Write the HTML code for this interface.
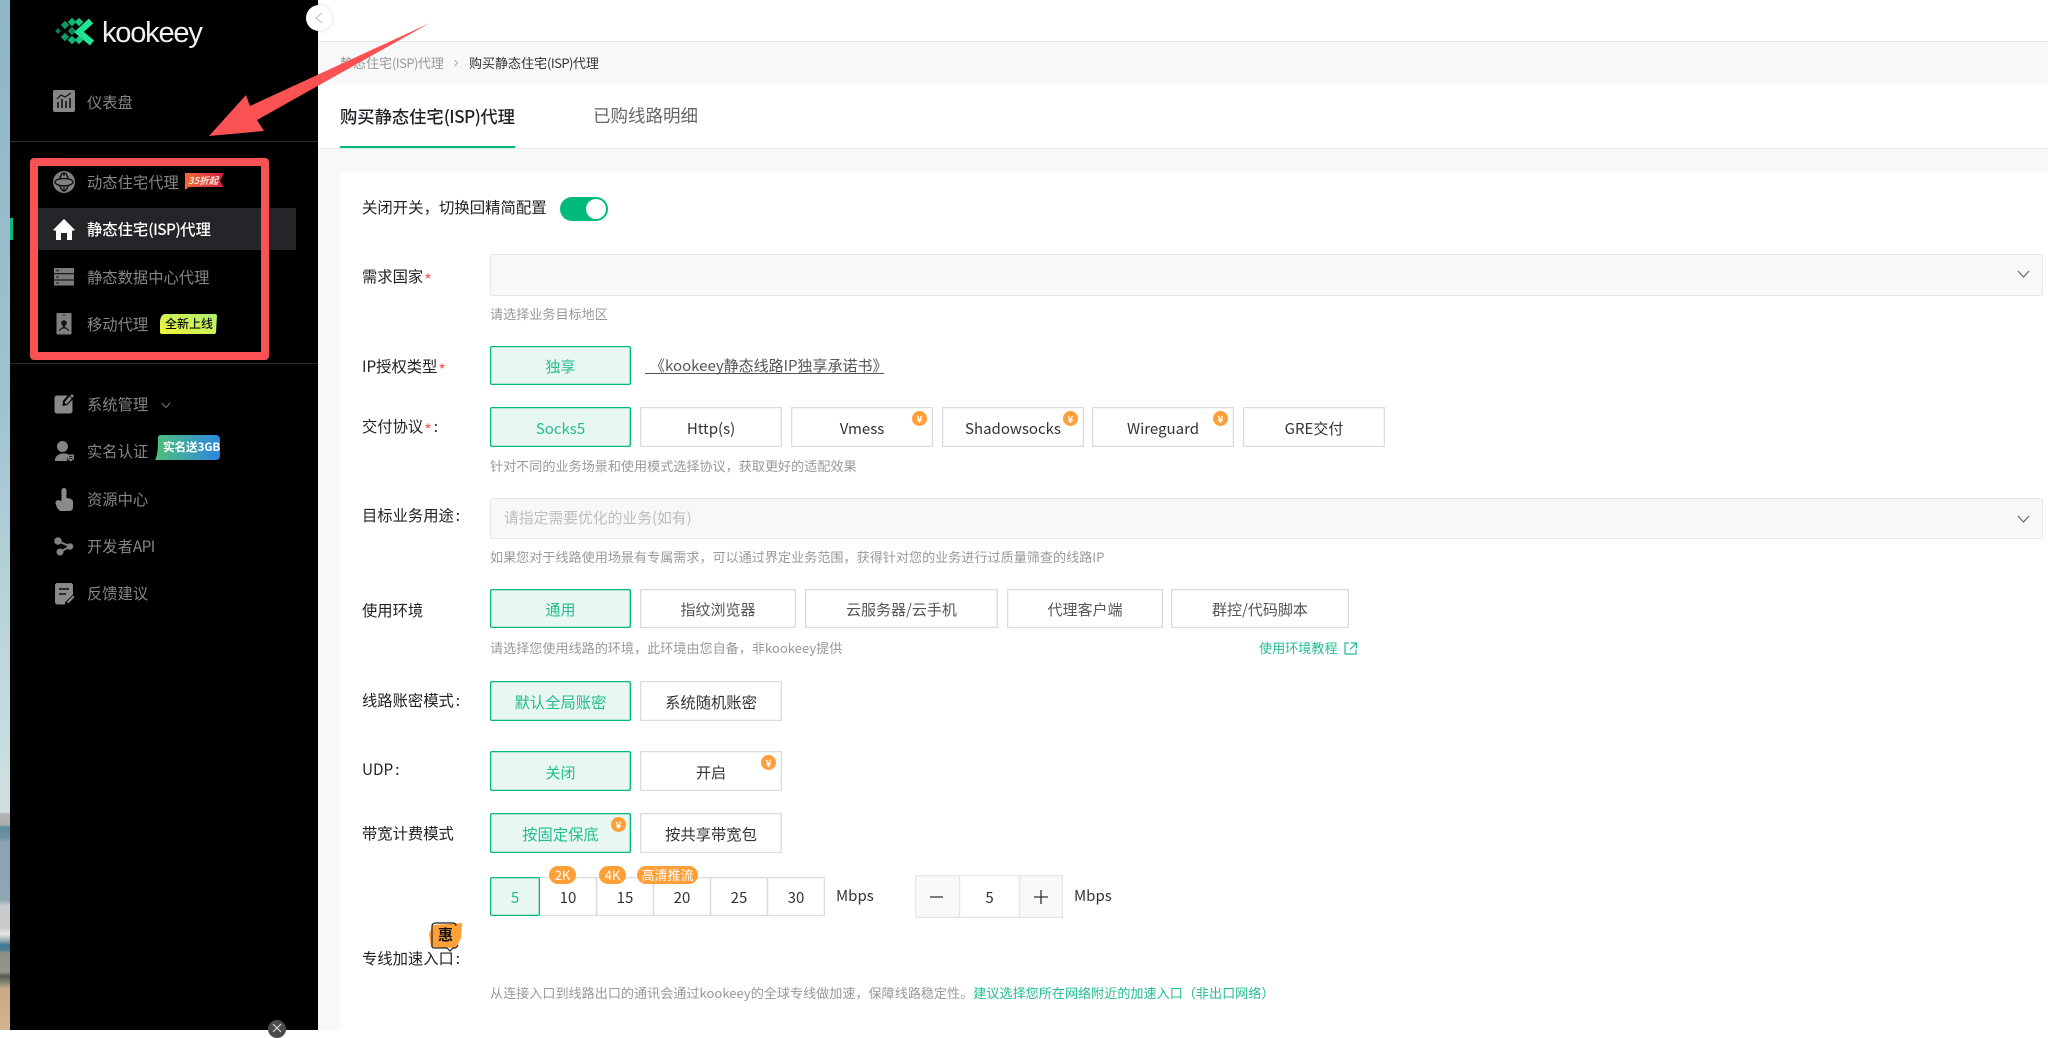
<!DOCTYPE html>
<html lang="zh-CN">
<head>
<meta charset="utf-8">
<title>kookeey</title>
<style>
html,body{margin:0;padding:0;background:#fff}
body{width:2048px;height:1030px;position:relative;overflow:hidden;font-family:"Noto Sans CJK SC","Liberation Sans",sans-serif;font-size:15.3px;color:#222}
.a{position:absolute;white-space:nowrap}
.t{position:absolute;white-space:nowrap;line-height:20px;height:20px}
.m{color:#858585}
.h{color:#999;font-size:13.1px}
.b{position:absolute;box-sizing:border-box;display:flex;align-items:center;justify-content:center;white-space:nowrap;box-shadow:inset 0 0 0 1.3px #dcdcdc;background:#fff;color:#333;font-size:15px;padding-top:2px}
.s{box-shadow:inset 0 0 0 1.3px #00ba7c;background:#e8f7f2;color:#22bd8c;border-radius:2px}
.y{position:absolute;width:15px;height:15px;border-radius:50%;background:#ff9f38;color:#fff;font-size:10px;line-height:15px;text-align:center;font-weight:700}
.o{position:absolute;height:18px;border-radius:9px;background:#ff9f38;color:#fff;font-size:13px;line-height:18px;text-align:center}
.sel{position:absolute;box-sizing:border-box;left:490px;width:1553px;height:42px;background:#f7f8fa;border:1px solid #e4e7eb;border-radius:2px}
.r{color:#f55;position:relative;top:4px;font-size:16px;margin-left:1px}
.c{margin-left:2px}
.n{letter-spacing:-.55px}
svg{position:absolute;overflow:visible}
</style>
</head>
<body>
<!-- left wallpaper strip -->
<div class="a" style="left:0;top:0;width:10px;height:1030px;background:linear-gradient(180deg,#8db6c6 0,#9fc2cf 400px,#bcd6dc 640px,#d0e0e2 812px,#b3b7b6 814px,#a8adad 825px,#5f8b9a 827px,#6d93a2 838px,#8ea4b2 842px,#8fa5b3 900px,#c9cdd0 906px,#c8cacc 928px,#e8e8e6 934px,#8fa3ab 941px,#3f7a93 945px,#4f7e91 950px,#8d9088 953px,#94958a 972px,#55584f 976px,#80806f 982px,#c9a983 988px,#d1b491 1030px)"></div>
<!-- sidebar -->
<div class="a" style="left:10px;top:0;width:308px;height:1030px;background:#000"></div>
<!-- main backgrounds -->
<div class="a" style="left:318px;top:41px;width:1730px;height:1px;background:#e6e6e6"></div>
<div class="a" style="left:318px;top:42px;width:1730px;height:41px;background:#f7f8fa"></div>
<div class="a" style="left:318px;top:148px;width:1730px;height:1px;background:#e4e7eb"></div>
<div class="a" style="left:318px;top:149px;width:1730px;height:22px;background:#f7f8fa"></div>
<div class="a" style="left:318px;top:171px;width:22px;height:859px;background:#f7f8fa"></div>

<!-- logo -->
<svg style="left:0;top:0" width="320" height="60" viewBox="0 0 320 60">
<g fill="#0f9a63"><rect x="-3" y="-3" width="6" height="6" transform="translate(58 31) rotate(45) scale(.7)" fill="#0a7a50"/><rect x="-3" y="-3" width="6" height="6" transform="translate(65 25) rotate(45)"/><rect x="-3" y="-3" width="6" height="6" transform="translate(65 37) rotate(45)"/><rect x="-3" y="-3" width="6" height="6" transform="translate(72 22) rotate(45)" fill="#13b576"/><rect x="-3" y="-3" width="6" height="6" transform="translate(72 31) rotate(45)" fill="#0c8658"/><rect x="-3" y="-3" width="6" height="6" transform="translate(72 40) rotate(45)" fill="#13b576"/><rect x="-3" y="-3" width="6" height="6" transform="translate(79 22) rotate(45)" fill="#17c884"/><rect x="-3" y="-3" width="6" height="6" transform="translate(79 40) rotate(45)" fill="#17c884"/></g>
<path d="M91 21L79 32L92 43" fill="none" stroke="#21e594" stroke-width="6.5" stroke-linejoin="miter"/>
</svg>
<div class="a" style="left:102px;top:12px;font-size:29px;line-height:42px;color:#f2f2f2;letter-spacing:-1.2px;font-family:'Liberation Sans',sans-serif">kookeey</div>

<!-- collapse -->
<div class="a" style="left:306px;top:5px;width:26px;height:26px;border-radius:50%;background:#fff;box-shadow:0 0 4px rgba(0,0,0,.15)"></div>
<svg style="left:0;top:0" width="340" height="40"><path d="M322 13L316 18L322 23" fill="none" stroke="#bbb" stroke-width="1"/></svg>

<!-- menu -->
<div class="a" style="left:10px;top:141px;width:308px;height:1px;background:#2a2a2a"></div>
<div class="a" style="left:10px;top:363px;width:308px;height:1px;background:#2a2a2a"></div>
<div class="a" style="left:38px;top:208px;width:258px;height:42px;background:#242529"></div>
<div class="a" style="left:10px;top:218px;width:3px;height:22px;background:#00ba7c"></div>

<div class="t m" style="left:87px;top:92px">仪表盘</div>
<div class="t m" style="left:87px;top:172px">动态住宅代理</div>
<div class="t" style="left:87px;top:219px;color:#fff;font-weight:500">静态住宅<span class="n">(ISP)</span>代理</div>
<div class="t m" style="left:87px;top:267px">静态数据中心代理</div>
<div class="t m" style="left:87px;top:314px">移动代理</div>
<div class="t m" style="left:87px;top:394px">系统管理</div>
<div class="t m" style="left:87px;top:441px">实名认证</div>
<div class="t m" style="left:87px;top:489px">资源中心</div>
<div class="t m" style="left:87px;top:536px">开发者<span class="n">API</span></div>
<div class="t m" style="left:87px;top:583px">反馈建议</div>

<!-- menu icons -->
<svg style="left:0;top:0" width="320" height="620" viewBox="0 0 320 620">
<!-- dashboard -->
<rect x="53" y="90" width="22" height="22" rx="2" fill="#868686"/>
<path d="M58 108v-6M62 108v-9M66 108v-7M70 108v-10" stroke="#111" stroke-width="1.6"/>
<path d="M57 99L61 95L65 97L71 93" fill="none" stroke="#111" stroke-width="1.2"/>
<!-- dynamic -->
<circle cx="64" cy="182" r="11" fill="#808080"/>
<ellipse cx="64" cy="182" rx="4.500" ry="9" fill="none" stroke="#111" stroke-width="1.400"/>
<path d="M55 182c0-2 4-3.500 9-3.500s9 1.500 9 3.500s-4 4-9 4s-9-2-9-4z" fill="#808080" stroke="#111" stroke-width="1.400"/>
<path d="M64 173v3M64 187v4" stroke="#111" stroke-width="1.400"/>
<!-- home -->
<path d="M64 219L53 230L56 231V240H61V233H67V240H72V231L75 230Z" fill="#fff"/>
<!-- server -->
<path d="M54 268h20v5.200h-20zM54 274.300h20v5.200h-20zM54 280.500h20v5h-20z" fill="#7c7c7c"/>
<path d="M56.500 270.500h2M56.500 277h2M56.500 283h2" stroke="#111" stroke-width="1.500"/>
<!-- mobile -->
<rect x="56.500" y="313" width="15" height="21.500" rx="1" fill="#808080"/>
<circle cx="64" cy="323" r="2.800" fill="#111"/>
<path d="M64 324.500l2 3h-4z" fill="#111"/>
<path d="M59 331c1.500-2.500 3-3 5-3s3.500.5 5 3" fill="none" stroke="#111" stroke-width="1"/>
<path d="M62.500 315h3" stroke="#111" stroke-width=".8"/>
<!-- system -->
<path d="M57 395.500h10.500l-4.500 5.500l-.5 5l5-1l5-5.500v11.500a2.500 2.500 0 0 1-2.500 2.500H57a2.500 2.500 0 0 1-2.500-2.500V398a2.500 2.500 0 0 1 2.500-2.500z" fill="#8a8a8a"/>
<path d="M65.500 403.500l5-6" stroke="#8a8a8a" stroke-width="3"/>
<circle cx="72" cy="396" r="1.500" fill="#8a8a8a"/>
<!-- person -->
<circle cx="62.500" cy="446.500" r="5.500" fill="#858585"/>
<path d="M55 461c-.5-3.500 2-6 6-7.500h5c1.500.5 2.500 1.200 3 2c-2 1-2.500 3.500-1.500 5.500z" fill="#858585"/>
<path d="M67.500 454.500h6.500v4.500l-3.200 2.500l-3.300-2.500z" fill="#858585"/>
<path d="M69 456.500h3.500M69 458.500h3.500" stroke="#000" stroke-width=".8"/>
<!-- hand -->
<path d="M64 488c1.500 0 2.500 1 2.500 2.500V498c3 .3 6.500 1.200 6.500 4v5.500c0 2-1.500 3.500-3.500 3.500h-7.500c-2.500 0-3.500-1-5-3.500l-1.500-4c-.5-1.500 1-3 2.500-3.500l3.500 1V490.500c0-1.500 1-2.500 2.500-2.500z" fill="#8a8a8a"/>
<!-- api -->
<path d="M58 541L70 546.500L60 552" stroke="#828282" stroke-width="2" fill="none"/>
<circle cx="58" cy="541" r="3.800" fill="#828282"/><circle cx="70" cy="546.500" r="3.200" fill="#828282"/><circle cx="60" cy="552" r="3.500" fill="#828282"/>
<!-- feedback -->
<path d="M57.500 583h13a2.500 2.500 0 0 1 2.500 2.500v9l-8 8v2H57.500a2.500 2.500 0 0 1-2.500-2.500V585.500a2.500 2.500 0 0 1 2.500-2.500z" fill="#8a8a8a"/>
<path d="M59 589h10M59 594h7" stroke="#111" stroke-width="1.500"/>
<path d="M67 602l6-6.500l1.500 1.500l-6 6.500z" fill="#8a8a8a"/>
<!-- caret -->
<path d="M161.500 403L166 407.500L170 403" fill="none" stroke="#777" stroke-width="1"/>
</svg>

<!-- sidebar tags -->
<svg style="left:0;top:0" width="320" height="470" viewBox="0 0 320 470">
<defs>
<linearGradient id="g1" x1="0" x2="1"><stop offset="0" stop-color="#f06a3c"/><stop offset="1" stop-color="#d4203f"/></linearGradient>
<linearGradient id="g2" x1="0" x2="1" y1="1" y2="0"><stop offset="0" stop-color="#f1f537"/><stop offset="1" stop-color="#aef070"/></linearGradient>
<linearGradient id="g3" x1="0" x2="1"><stop offset="0" stop-color="#4fc07a"/><stop offset="1" stop-color="#2c86e0"/></linearGradient>
</defs>
<path d="M185 173H224L220 181L224 187H189L185 190Z" fill="url(#g1)"/>
<path d="M165 314H215a2 2 0 0 1 2 2L216 332a2 2 0 0 1-2 2H162a2 2 0 0 1-2-2V322C160 318 162 314 165 314Z" fill="url(#g2)"/>
<path d="M161 435H216a4 4 0 0 1 4 4V456a4 4 0 0 1-4 4H155C157 457 158 450 158 438C158 436 159 435 161 435Z" fill="url(#g3)"/>
</svg>
<div class="a" style="left:188px;top:172px;font-size:9.500px;line-height:17px;color:#ffe9d6;font-style:italic;font-weight:700">35折起</div>
<div class="a" style="left:165px;top:314px;font-size:12px;line-height:20px;color:#111;font-weight:500">全新上线</div>
<div class="a" style="left:163px;top:437px;font-size:11.600px;line-height:21px;color:#fff;font-weight:700;letter-spacing:-.1px">实名送3GB</div>

<!-- close -->
<div class="a" style="left:268px;top:1020px;width:18px;height:18px;border-radius:50%;background:#4a4a4a"></div>
<svg style="left:0;top:0" width="300" height="1030"><path d="M273 1024L281 1032M281 1024L273 1032" stroke="#ddd" stroke-width="1.200"/></svg>

<!-- breadcrumb -->
<div class="t" style="left:340px;top:53px;font-size:13px;color:#999">静态住宅<span class="n">(ISP)</span>代理</div>
<svg style="left:0;top:0" width="470" height="80"><path d="M454.500 60L457.500 63L454.500 66" fill="none" stroke="#aaa" stroke-width="1"/></svg>
<div class="t" style="left:469px;top:53px;font-size:13px;color:#333">购买静态住宅<span class="n">(ISP)</span>代理</div>

<!-- tabs -->
<div class="t" style="left:340px;top:106px;font-size:17.300px;color:#1f2328;font-weight:500">购买静态住宅<span class="n">(ISP)</span>代理</div>
<div class="t" style="left:593px;top:106px;font-size:17.500px;color:#666">已购线路明细</div>
<div class="a" style="left:340px;top:146px;width:175px;height:2px;background:#00ba7c"></div>

<!-- row: toggle -->
<div class="t" style="left:362px;top:197px;font-size:15.400px">关闭开关，切换回精简配置</div>
<div class="a" style="left:560px;top:197px;width:48px;height:24px;border-radius:12px;background:#00ba7c"></div>
<div class="a" style="left:586px;top:199px;width:20px;height:20px;border-radius:50%;background:#fff"></div>

<!-- country -->
<div class="t" style="left:362px;top:265px">需求国家<span class="r">*</span></div>
<div class="sel" style="top:254px"></div>
<div class="t h" style="left:490px;top:304px">请选择业务目标地区</div>

<!-- ip type -->
<div class="t" style="left:362px;top:355px">IP授权类型<span class="r">*</span></div>
<div class="b s" style="left:490px;top:346px;width:141px;height:39px">独享</div>
<div class="t" style="left:650px;top:356px;font-size:15px;color:#555">《kookeey静态线路IP独享承诺书》</div>
<div class="a" style="left:645px;top:373px;width:239px;height:1px;background:#555"></div>

<!-- protocol -->
<div class="t" style="left:362px;top:415px">交付协议<span class="r">*</span><span class="c">:</span></div>
<div class="b s" style="left:490px;top:407px;width:141px;height:40px">Socks5</div>
<div class="b" style="left:640px;top:407px;width:142px;height:40px">Http(s)</div>
<div class="b" style="left:791px;top:407px;width:142px;height:40px">Vmess</div>
<div class="b" style="left:942px;top:407px;width:142px;height:40px">Shadowsocks</div>
<div class="b" style="left:1092px;top:407px;width:142px;height:40px">Wireguard</div>
<div class="b" style="left:1243px;top:407px;width:142px;height:40px">GRE交付</div>
<div class="y" style="left:912px;top:411px">¥</div>
<div class="y" style="left:1063px;top:411px">¥</div>
<div class="y" style="left:1213px;top:411px">¥</div>
<div class="t h" style="left:490px;top:456px">针对不同的业务场景和使用模式选择协议，获取更好的适配效果</div>

<!-- target -->
<div class="t" style="left:362px;top:505px">目标业务用途<span class="c">:</span></div>
<div class="sel" style="top:498px;height:41px"></div>
<svg style="left:0;top:0" width="2048" height="560"><path d="M2018 271L2023.500 277L2029 271M2018 516L2023.500 522L2029 516" fill="none" stroke="#666" stroke-width="1.200"/></svg>
<div class="t" style="left:504px;top:508px;font-size:14.800px;color:#bdbdbd">请指定需要优化的业务(如有)</div>
<div class="t h" style="left:490px;top:547px">如果您对于线路使用场景有专属需求，可以通过界定业务范围，获得针对您的业务进行过质量筛查的线路IP</div>

<!-- env -->
<div class="t" style="left:362px;top:600px">使用环境</div>
<div class="b s" style="left:490px;top:589px;width:141px;height:39px">通用</div>
<div class="b" style="left:640px;top:589px;width:156px;height:39px;color:#555">指纹浏览器</div>
<div class="b" style="left:805px;top:589px;width:193px;height:39px;color:#555">云服务器/云手机</div>
<div class="b" style="left:1007px;top:589px;width:156px;height:39px;color:#555">代理客户端</div>
<div class="b" style="left:1171px;top:589px;width:178px;height:39px;color:#555">群控/代码脚本</div>
<div class="t h" style="left:490px;top:638px">请选择您使用线路的环境，此环境由您自备，非kookeey提供</div>
<div class="t" style="left:1259px;top:638px;font-size:13.100px;color:#22bd8c">使用环境教程</div>
<svg style="left:0;top:0" width="1400" height="670"><path d="M1349 643H1345V654H1356V650M1351 643H1356.500V648.500M1356.500 643L1350 649.500" fill="none" stroke="#22bd8c" stroke-width="1.200"/></svg>

<!-- password -->
<div class="t" style="left:362px;top:690px">线路账密模式<span class="c">:</span></div>
<div class="b s" style="left:490px;top:681px;width:141px;height:40px;font-size:15.300px">默认全局账密</div>
<div class="b" style="left:640px;top:681px;width:142px;height:40px;font-size:15.300px">系统随机账密</div>

<!-- udp -->
<div class="t" style="left:362px;top:759px">UDP<span class="c">:</span></div>
<div class="b s" style="left:490px;top:751px;width:141px;height:40px">关闭</div>
<div class="b" style="left:640px;top:751px;width:142px;height:40px">开启</div>
<div class="y" style="left:761px;top:755px">¥</div>

<!-- billing -->
<div class="t" style="left:362px;top:823px">带宽计费模式</div>
<div class="b s" style="left:490px;top:813px;width:141px;height:40px;font-size:15.300px">按固定保底</div>
<div class="b" style="left:640px;top:813px;width:142px;height:40px;font-size:15.300px">按共享带宽包</div>
<div class="y" style="left:611px;top:817px">¥</div>

<!-- numbers -->
<div class="b" style="left:539px;top:877px;width:58px;height:39px">10</div>
<div class="b" style="left:596px;top:877px;width:58px;height:39px">15</div>
<div class="b" style="left:653px;top:877px;width:58px;height:39px">20</div>
<div class="b" style="left:710px;top:877px;width:58px;height:39px">25</div>
<div class="b" style="left:767px;top:877px;width:58px;height:39px">30</div>
<div class="b s" style="left:490px;top:877px;width:50px;height:39px">5</div>
<div class="o" style="left:549px;top:866px;width:27px">2K</div>
<div class="o" style="left:599px;top:866px;width:27px">4K</div>
<div class="o" style="left:637px;top:866px;width:61px">高清推流</div>
<div class="t" style="left:836px;top:886px;color:#333;font-size:15px">Mbps</div>

<!-- stepper -->
<div class="b" style="left:915px;top:875px;width:45px;height:43px;background:#f9f9f9;box-shadow:inset 0 0 0 1.300px #e6e6e6"></div>
<div class="b" style="left:959px;top:875px;width:61px;height:43px;box-shadow:inset 0 0 0 1.300px #e6e6e6">5</div>
<div class="b" style="left:1019px;top:875px;width:44px;height:43px;background:#f9f9f9;box-shadow:inset 0 0 0 1.300px #e6e6e6"></div>
<svg style="left:0;top:0" width="1100" height="930"><path d="M930 897H943M1034 897H1048M1041 890V904" stroke="#333" stroke-width="1.300"/></svg>
<div class="t" style="left:1074px;top:886px;color:#333;font-size:15px">Mbps</div>

<!-- tunnel -->
<div class="t" style="left:362px;top:948px">专线加速入口<span class="c">:</span></div>
<svg style="left:0;top:0" width="480" height="960" viewBox="0 0 480 960">
<path d="M433 925L462 923L461 938L456 948L431 947L429 934Z" fill="#ff9f38"/>
<path d="M436 923H453C455 923 456 924 456 926M432 926V946C432 948 433 948 435 948H447L450 951L453 948H455C456 948 457 947 458 945M436 923C434 923 432 924 432 926" fill="none" stroke="#222" stroke-width="1.200"/>
</svg>
<div class="a" style="left:438px;top:925px;font-size:15px;line-height:20px;color:#111;font-weight:700">惠</div>
<div class="t h" style="left:490px;top:983px">从连接入口到线路出口的通讯会通过kookeey的全球专线做加速，保障线路稳定性。<span style="color:#22bd8c">建议选择您所在网络附近的加速入口（非出口网络）</span></div>

<!-- red annotation -->
<div class="a" style="box-sizing:border-box;left:30px;top:158px;width:239px;height:202px;border:8px solid #fa5252;border-radius:4px"></div>
<svg style="left:0;top:0" width="440" height="140" viewBox="0 0 440 140"><path d="M430 23L250 106L246 95L209 136L264 131L257 120Z" fill="#fa5252"/></svg>
</body>
</html>
